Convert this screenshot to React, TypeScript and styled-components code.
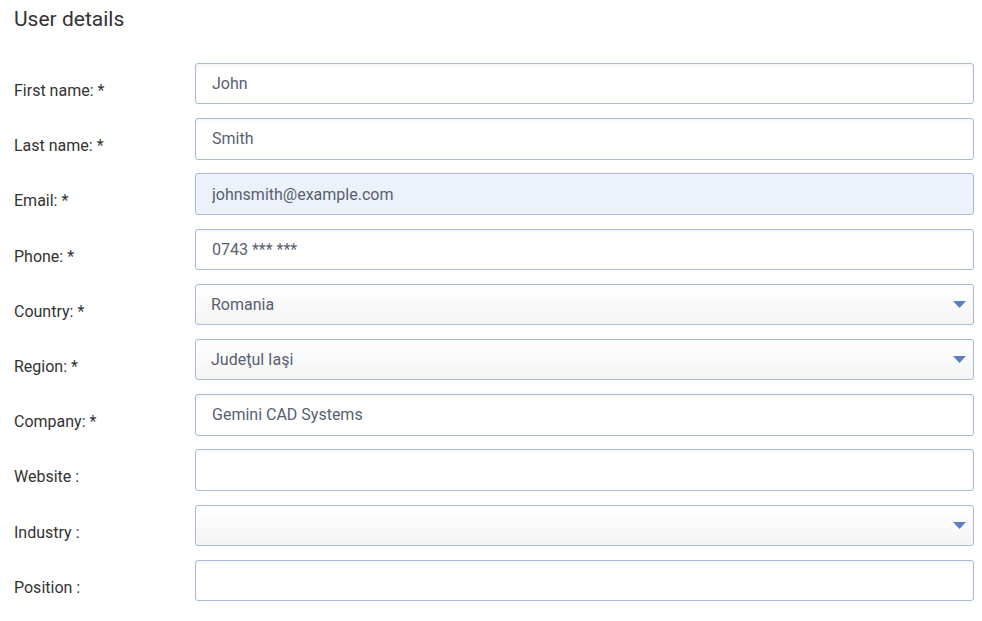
import React from 'react';
import styled, { createGlobalStyle } from 'styled-components';

const GlobalStyle = createGlobalStyle`
  body {
    margin: 0;
    background: #fff;
    font-family: Roboto, 'Noto Sans', 'Liberation Sans', sans-serif;
    color: #333;
  }
`;

type Field = {
  label: string;
  value?: string;
  kind?: 'text' | 'select';
  disabled?: boolean;
};

const fields: Field[] = [
  { label: 'First name: *', value: 'John' },
  { label: 'Last name: *', value: 'Smith' },
  { label: 'Email: *', value: 'johnsmith@example.com', disabled: true },
  { label: 'Phone: *', value: '0743 *** ***' },
  { label: 'Country: *', value: 'Romania', kind: 'select' },
  { label: 'Region: *', value: 'Judeţul Iaşi', kind: 'select' },
  { label: 'Company: *', value: 'Gemini CAD Systems' },
  { label: 'Website :' },
  { label: 'Industry :', kind: 'select' },
  { label: 'Position :' },
];

function App() {
  return (
    <>
      <GlobalStyle />
      <Page>
        <Title>User details</Title>
        <Form>
          {fields.map((f) => (
            <Row key={f.label}>
              <Label>{f.label}</Label>
              {f.kind === 'select' ? (
                <SelectWrap>
                  <Select defaultValue={f.value ?? ''}>
                    <option value={f.value ?? ''}>{f.value ?? ''}</option>
                  </Select>
                  <Caret width="13" height="7" viewBox="0 0 13 7">
                    <path d="M0 0h13L6.5 7z" fill="#5b7fc0" />
                  </Caret>
                </SelectWrap>
              ) : (
                <Input
                  type="text"
                  defaultValue={f.value ?? ''}
                  readOnly={f.disabled}
                  $disabled={f.disabled}
                />
              )}
            </Row>
          ))}
        </Form>
      </Page>
    </>
  );
}

export default App;

const Page = styled.div`
  padding: 0 8px 0 14px;
`;

const Title = styled.h2`
  margin: 0;
  padding-top: 6px;
  font-size: 21px;
  font-weight: 400;
  line-height: 26px;
  color: #333;
`;

const Form = styled.div`
  display: flex;
  flex-direction: column;
  gap: 13.8px;
  margin-top: 31px;
`;

const Row = styled.div`
  display: grid;
  grid-template-columns: 181px 1fr;
  height: 41.4px;
`;

const Label = styled.label`
  padding-top: 18px;
  font-size: 16px;
  line-height: 20px;
  color: #333;
`;

const fieldBase = `
  box-sizing: border-box;
  width: 100%;
  height: 41.4px;
  margin: 0;
  padding: 0 16px;
  border: 1px solid #a9b9d9;
  border-radius: 3px;
  font-family: Roboto, 'Noto Sans', 'Liberation Sans', sans-serif;
  font-size: 16px;
  color: #575f72;
  outline: none;
`;

const Input = styled.input<{ $disabled?: boolean }>`
  ${fieldBase}
  background: ${(p) => (p.$disabled ? '#edf1f9' : '#fff')};
  box-shadow: ${(p) => (p.$disabled ? 'none' : 'inset 0 2px 4px -1px rgba(0, 0, 0, 0.06)')};
`;

const SelectWrap = styled.div`
  position: relative;
  height: 41.4px;
`;

const Select = styled.select`
  ${fieldBase}
  padding-left: 15px;
  appearance: none;
  background: linear-gradient(#ffffff, #f4f4f4);
`;

const Caret = styled.svg`
  position: absolute;
  top: 17px;
  right: 8px;
  pointer-events: none;
`;
